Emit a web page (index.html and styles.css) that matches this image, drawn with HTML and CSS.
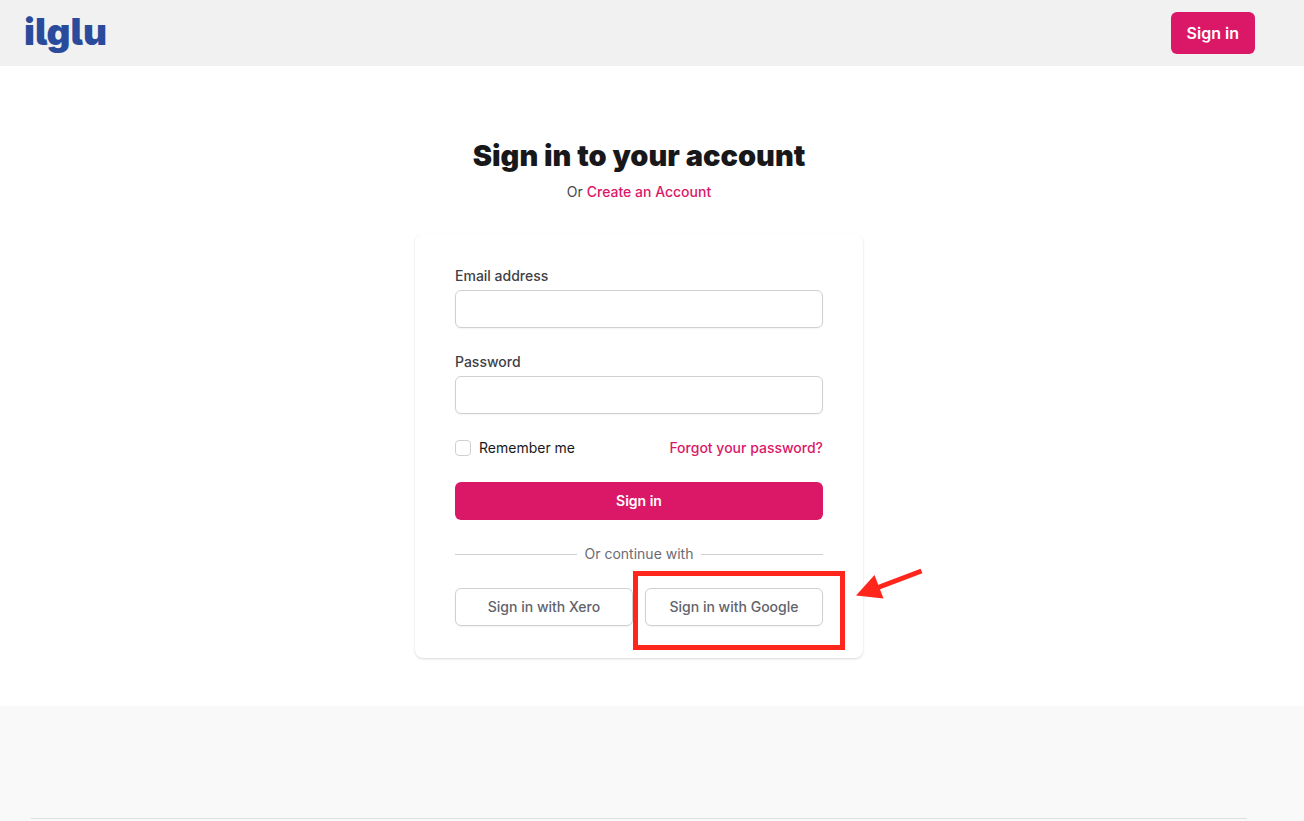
FILE: index.html
```html
<!DOCTYPE html>
<html lang="en">
<head>
  <meta charset="UTF-8">
  <meta name="viewport" content="width=device-width, initial-scale=1">
  <title>Sign in - ilglu</title>
  <link rel="stylesheet" href="styles.css">
</head>
<body>

  <header class="site-header">
    <a href="#" class="logo">ilglu</a>
    <button type="button" class="btn btn-primary btn-header">Sign in</button>
  </header>

  <main class="main">
    <h1 class="title">Sign in to your account</h1>
    <p class="subtitle">Or <a href="#">Create an Account</a></p>

    <form class="card">
      <div class="field">
        <label for="email">Email address</label>
        <input id="email" name="email" type="email">
      </div>

      <div class="field">
        <label for="password">Password</label>
        <input id="password" name="password" type="password">
      </div>

      <div class="options">
        <div class="remember">
          <input id="remember" name="remember" type="checkbox">
          <label for="remember">Remember me</label>
        </div>
        <a href="#">Forgot your password?</a>
      </div>

      <button type="submit" class="btn btn-primary">Sign in</button>

      <div class="divider">Or continue with</div>

      <div class="providers">
        <button type="button" class="btn btn-outline">Sign in with Xero</button>
        <div class="callout">
          <button type="button" class="btn btn-outline">Sign in with Google</button>
          <span class="callout-box"></span>
          <svg class="callout-arrow" width="68" height="32" viewBox="0 0 68 32" aria-hidden="true">
            <path d="M65.500 3 L22 19.500" fill="none" stroke="#ff261c" stroke-width="5"/>
            <path d="M0 27.500 L18.500 7 L27.500 30.500 Z" fill="#ff261c"/>
          </svg>
        </div>
      </div>
    </form>
  </main>

  <footer class="site-footer">
    <hr>
  </footer>

</body>
</html>
```

FILE: styles.css
```css
* {
  box-sizing: border-box;
}
body {
  margin: 0;
  min-height: 100vh;
  display: flex;
  flex-direction: column;
  font-family: Inter, "Liberation Sans", sans-serif;
  font-size: 14px;
  line-height: 20px;
  color: #18181b;
  background: #fff;
}
a {
  color: #db1768;
  font-weight: 500;
  text-decoration: none;
}

/* header */
.site-header {
  display: flex;
  align-items: center;
  justify-content: space-between;
  padding: 12px 49px 12px 24px;
  background: #f1f1f1;
}
.logo {
  padding-bottom: 2px;
  color: #2a4b9b;
  font-size: 37px;
  font-weight: 900;
  line-height: 36px;
  font-feature-settings: "cv05";
}

/* buttons */
.btn {
  width: 100%;
  height: 38px;
  padding: 0 15px;
  border: 1px solid transparent;
  border-radius: 6px;
  font-family: inherit;
  font-size: 14px;
  font-weight: 500;
  line-height: 20px;
  cursor: pointer;
}
.btn-primary {
  color: #fff;
  font-weight: 600;
  background: #db1768;
}
.btn-header {
  width: auto;
  height: 42px;
  font-size: 16px;
}
.btn-outline {
  color: #63636b;
  background: #fff;
  border-color: #d0d0d3;
  box-shadow: 0 1px 2px rgba(0, 0, 0, 0.05);
}

/* sign in form */
.main {
  padding: 72px 26px 48px 0;
}
.title {
  margin: 0;
  font-size: 29px;
  font-weight: 900;
  line-height: 36px;
  text-align: center;
}
.subtitle {
  margin: 8px 0 32px;
  color: #46464d;
  text-align: center;
}
.card {
  display: flex;
  flex-direction: column;
  gap: 24px;
  max-width: 448px;
  margin: 0 auto;
  padding: 32px 40px;
  border-radius: 8px;
  background: #fff;
  box-shadow: 0 1px 3px rgba(0, 0, 0, 0.1), 0 1px 2px rgba(0, 0, 0, 0.06);
}
.field label {
  display: block;
  margin-bottom: 4px;
  color: #3f3f46;
  font-weight: 500;
}
.field input {
  display: block;
  width: 100%;
  height: 38px;
  padding: 8px 12px;
  border: 1px solid #d0d0d3;
  border-radius: 6px;
  font: inherit;
  box-shadow: 0 1px 2px rgba(0, 0, 0, 0.05);
}
.options {
  display: flex;
  align-items: center;
  justify-content: space-between;
}
.remember {
  display: flex;
  align-items: center;
  gap: 8px;
}
.remember input {
  appearance: none;
  width: 16px;
  height: 16px;
  margin: 0;
  border: 1px solid #d0d0d3;
  border-radius: 4px;
  background: #fff;
}
.remember input:checked {
  background: #db1768;
}
.divider {
  display: flex;
  align-items: center;
  gap: 8px;
  color: #6b6b73;
}
.divider::before,
.divider::after {
  content: "";
  flex: 1;
  height: 1px;
  background: #d0d0d3;
}
.providers {
  display: grid;
  grid-template-columns: 1fr 1fr;
  gap: 12px;
}

/* red marker around the Google button */
.callout {
  position: relative;
}
.callout-box {
  position: absolute;
  top: -17px;
  right: -22px;
  bottom: -24px;
  left: -12px;
  border: 5px solid #ff261c;
  pointer-events: none;
}
.callout-arrow {
  position: absolute;
  top: -20px;
  left: calc(100% + 33px);
}

/* footer */
.site-footer {
  flex: 1;
  padding: 112px 57px 0 31px;
  background: #f9f9f9;
}
.site-footer hr {
  margin: 0;
  border: 0;
  border-top: 1px solid #dfdfdf;
}
```
